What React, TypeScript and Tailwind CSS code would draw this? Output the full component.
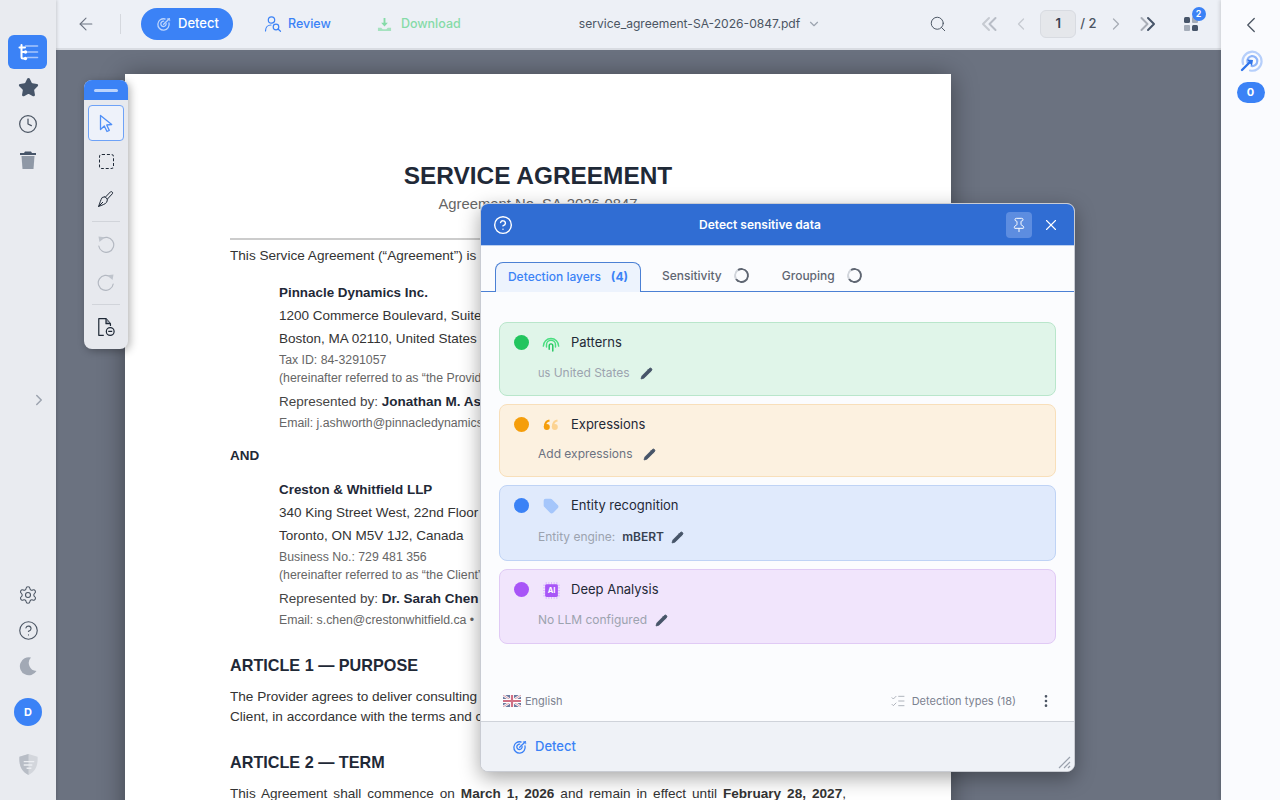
import React from "react";
import {
  ArrowLeft,
  ChevronDown,
  ChevronLeft,
  ChevronRight,
  CircleHelp,
  Clock,
  EllipsisVertical,
  ListChecks,
  Pencil,
  Pin,
  Search,
  Settings,
  Star,
  Tag,
  X,
} from "lucide-react";

const TargetIcon = ({ className = "" }: { className?: string }) => (
  <svg viewBox="0 0 24 24" fill="none" stroke="currentColor" strokeWidth="2" strokeLinecap="round" className={className}>
    <path d="M19.500 10.500a8.500 8.500 0 1 1-6-6" />
    <path d="M15.200 11.500a4 4 0 1 1-3.700-3.700" />
    <path d="M11.500 12.500 20 4" />
    <path d="M17 4.500 20 4l.5 3" opacity="0.7" />
  </svg>
);

const TreeIcon = () => (
  <svg viewBox="0 0 24 24" width="24" height="24" fill="none" strokeLinecap="round">
    <path d="M9.500 6h12M11.500 12h10M11.500 17.500h10" stroke="#a9c6fb" strokeWidth="1.600" />
    <path d="M5.500 5v12c0 1 .5 1.500 1.500 1.500h2M5.500 12H9M3.500 7.500H9" stroke="#fff" strokeWidth="2" />
    <circle cx="9.500" cy="12" r="1.700" fill="#fff" />
    <circle cx="9.500" cy="18.500" r="1.700" fill="#fff" />
  </svg>
);

const ReviewIcon = () => (
  <svg viewBox="0 0 18 18" width="18" height="18" fill="none" stroke="#3b82f6" strokeWidth="1.200" strokeLinecap="round">
    <circle cx="7.500" cy="5" r="3.200" />
    <path d="M1.500 16c0-3.500 2.400-6 5.500-6" />
    <circle cx="12" cy="12" r="2.800" />
    <path d="m14 14 2.500 2.300" />
  </svg>
);

const DownloadIcon = () => (
  <svg viewBox="0 0 16 16" width="15" height="15" fill="#86dba8">
    <path d="M7 1h2v5h2.600L8 10 4.400 6H7z" />
    <path d="M1 11.500h3.500L6 13h4l1.500-1.500H15V15H1z" opacity="0.7" />
  </svg>
);

const BlocksIcon = () => (
  <svg viewBox="0 0 16 16" width="16" height="16">
    <rect x="1" y="1" width="6" height="6" rx="1.500" fill="#475569" />
    <rect x="1" y="9" width="6" height="6" rx="1" fill="#a5adb9" />
    <rect x="9" y="9" width="6" height="6" rx="1.500" fill="#475569" />
    <rect x="9" y="1" width="6" height="6" rx="1" fill="#a5adb9" />
  </svg>
);

const DoubleChevron = ({ dir, first, second }: { dir: "left" | "right"; first: string; second: string }) => (
  <svg viewBox="0 0 20 20" width="20" height="20" fill="none" strokeWidth="2" strokeLinecap="round" strokeLinejoin="round" className={dir === "left" ? "-scale-x-100" : ""}>
    <path d="m3.500 4 6 6-6 6" stroke={first} />
    <path d="m10 4 6 6-6 6" stroke={second} />
  </svg>
);

const CursorIcon = () => (
  <svg viewBox="0 0 20 20" width="20" height="20" fill="none" stroke="#4f8ff7" strokeWidth="1.300" strokeLinejoin="round">
    <path d="M4.500 2.500v14l3.800-3.500 2.700 5.500 2.300-1.100-2.600-5.400 5-.500z" />
  </svg>
);

const TrashIcon = () => (
  <svg viewBox="0 0 18 20" width="18" height="20">
    <path d="M6 1.500h6l1 1.500h4v2H1V3h4z" fill="#475569" />
    <path d="M2.500 6h13L14.500 19h-11z" fill="#8f98a6" />
  </svg>
);

const MoonIcon = () => (
  <svg viewBox="0 0 20 20" width="20" height="20">
    <path d="M13 1.500A9 9 0 1 0 18.500 15 8 8 0 0 1 13 1.500z" fill="#a2a9b5" />
  </svg>
);

const ShieldIcon = () => (
  <svg viewBox="0 0 22 24" width="21" height="23">
    <path d="M11 1 20.500 4c.500 8-1.500 15-9.500 19C3 19 1 12 1.500 4z" fill="#d3d6dc" />
    <path d="M11 1v22C3 19 1 12 1.500 4z" fill="#b8bdc6" />
    <path d="M6 9h11M6 12.500h9M9 16h5" stroke="#eceef2" strokeWidth="1.500" />
  </svg>
);

const UndoIcon = ({ flip }: { flip?: boolean }) => (
  <svg viewBox="0 0 18 18" width="18" height="18" fill="none" className={flip ? "-scale-x-100" : ""}>
    <path d="M4 4.500a7.500 7.500 0 1 1-2.200 6.500" stroke="#b4b9c2" strokeWidth="1.200" strokeLinecap="round" />
    <path d="M1.500 1.500 7.500 2.200 2.500 7z" fill="#bfc4cc" />
  </svg>
);

const BrushIcon = () => (
  <svg viewBox="0 0 18 18" width="18" height="18" fill="none" stroke="#1f2937" strokeWidth="1" strokeLinejoin="round">
    <path d="M8 7.500 13.500 1.800c1-.900 2.800.800 1.900 1.900L10 9.500" />
    <path d="M5.200 7.500 8 6.700l2.500 2.700-.800 2.800C8 14.500 5 15 1.500 16.500 3 13 3.500 10 5.200 7.500z" />
    <path d="m1.500 16.500 4.500-4.500" />
  </svg>
);

const FileMinusIcon = () => (
  <svg viewBox="0 0 18 18" width="20" height="20" fill="none" stroke="#1f2937" strokeWidth="1.100" strokeLinejoin="round">
    <path d="M7 16.500H2.500V1.500H9L13 6v2" />
    <path d="M9 1.500V6h4" fill="#9ca3af" />
    <circle cx="12.800" cy="13" r="3.500" />
    <path d="M11 13h3.600" />
  </svg>
);

const TouchIcon = () => (
  <svg viewBox="0 0 20 20" width="18" height="18" fill="none" stroke="#4ade80" strokeWidth="1.600" strokeLinecap="round">
    <path d="M1.500 13.500a8.500 8.500 0 0 1 17 0" />
    <path d="M5 14.500V12a5 5 0 0 1 10 0v2.500" />
    <path d="M8 17v-4a2 2 0 0 1 4 0v6" stroke="#22c55e" />
  </svg>
);

const QuoteIcon = () => (
  <svg viewBox="0 0 16 12" width="16" height="12">
    <circle cx="3.800" cy="8" r="3" fill="#f59e0b" />
    <path d="M1.800 8C1.800 4.500 3.500 2 6.500 1.500" fill="none" stroke="#f59e0b" strokeWidth="2" />
    <circle cx="11.800" cy="8" r="3" fill="#fcd391" />
    <path d="M9.800 8c0-3.500 1.700-6 4.700-6.500" fill="none" stroke="#fcd391" strokeWidth="2" />
  </svg>
);

const AiIcon = () => (
  <svg viewBox="0 0 16 16" width="17" height="17">
    <path d="M3 0v16M5.500 0v16M8 0v16M10.500 0v16M13 0v16M0 3h16M0 5.500h16M0 8h16M0 10.500h16M0 13h16" stroke="#d8b4fe" strokeWidth="0.800" />
    <rect x="2" y="2" width="12" height="12" rx="1.500" fill="#a855f7" />
    <text x="8" y="10.700" textAnchor="middle" fontSize="7" fontWeight="700" fill="#fff" fontFamily="Inter">AI</text>
  </svg>
);

const FlagIcon = () => (
  <svg viewBox="0 0 18 12" width="18" height="12" opacity="0.75">
    <rect width="18" height="12" fill="#3d4f80" />
    <path d="m0 0 18 12M18 0 0 12" stroke="#fff" strokeWidth="2.400" />
    <path d="m0 0 18 12M18 0 0 12" stroke="#c4586f" strokeWidth="0.800" />
    <path d="M9 0v12M0 6h18" stroke="#fff" strokeWidth="4" />
    <path d="M9 0v12M0 6h18" stroke="#c4405c" strokeWidth="2.200" />
  </svg>
);

const TargetArrowIcon = () => (
  <svg viewBox="0 0 24 24" width="24" height="24" fill="none" strokeLinecap="round">
    <path d="M4 15a9.500 9.500 0 1 1 7 6.500" stroke="#b6cffb" strokeWidth="2.200" />
    <path d="M8.500 13.500a5 5 0 1 1 4 3.500" stroke="#8fb5f9" strokeWidth="2.200" />
    <path d="M3 21 10.500 13.500" stroke="#2f74ea" strokeWidth="2.400" />
    <path d="m8 10.500 6 .500-1 6z" fill="#2f74ea" />
  </svg>
);

const Spinner = () => (
  <span className="w-[15px] h-[15px] rounded-full border-2 border-[#5f6672] border-l-[#d1d5db] inline-block rotate-12" />
);

const PencilFilled = ({ className = "" }: { className?: string }) => (
  <Pencil size={13} className={`text-[#475569] ${className}`} fill="#475569" strokeWidth={1.500} />
);

const Sidebar = () => (
  <aside className="w-[56px] shrink-0 bg-[#e9ebf0] flex flex-col items-center pt-[35px] pb-[24px] shadow-[1px_0_3px_rgba(0,0,0,0.15)] z-10">
    <div className="w-[39px] h-[34px] -ml-[1px] rounded-md bg-[#3b82f6] flex items-center justify-center">
      <TreeIcon />
    </div>
    <Star size={21} className="mt-[8px] text-[#475569]" fill="#475569" />
    <Clock size={20} className="mt-[16px] text-[#4b5563]" strokeWidth={1.500} />
    <div className="mt-[16px]">
      <TrashIcon />
    </div>
    <div className="flex-1 flex items-center pt-[45px]">
      <ChevronRight size={18} className="text-[#9ca3af] ml-[22px]" />
    </div>
    <Settings size={20} className="text-[#4b5563]" strokeWidth={1.300} />
    <CircleHelp size={21} className="mt-[15px] text-[#4b5563]" strokeWidth={1.300} />
    <div className="mt-[15px]">
      <MoonIcon />
    </div>
    <div className="mt-[22px] w-[28px] h-[28px] rounded-full bg-[#3b82f6] flex items-center justify-center text-white text-[11px] font-bold">
      D
    </div>
    <div className="mt-[27px]">
      <ShieldIcon />
    </div>
  </aside>
);

const TopBar = () => (
  <header className="h-[50px] shrink-0 bg-[#edf0f6] border-b-2 border-[#d9dce2] flex items-center text-[12.500px] whitespace-nowrap">
    <ArrowLeft size={20} className="shrink-0 ml-[20px] text-[#6b7280]" strokeWidth={1.300} />
    <div className="ml-[24px] w-px h-[20px] bg-[#d5d8de]" />
    <button className="ml-[20px] h-[32px] w-[92px] pl-[1px] rounded-full bg-[#3b82f6] text-[13px] text-white flex items-center justify-center gap-[6px] font-medium">
      <TargetIcon className="w-[16px] h-[16px] text-[#bcd4fc]" />
      Detect
    </button>
    <div className="ml-[31px] flex items-center gap-[6px] text-[#3b82f6] font-medium">
      <ReviewIcon />
      Review
    </div>
    <div className="ml-[46px] flex items-center gap-[9px] text-[#86dba8] font-medium">
      <DownloadIcon />
      Download
    </div>
    <div className="ml-[118px] flex items-center gap-[7px] text-[12.100px] text-[#4b5563]">
      service_agreement-SA-2026-0847.pdf
      <ChevronDown size={14} className="text-[#9ca3af]" />
    </div>
    <Search size={18} className="shrink-0 ml-[108px] text-[#4b5563]" strokeWidth={1.300} />
    <div className="shrink-0 ml-[32px]">
      <DoubleChevron dir="left" first="#b8bdc6" second="#c6cad1" />
    </div>
    <ChevronLeft size={20} className="shrink-0 ml-[12px] text-[#c6cad1]" strokeWidth={1.500} />
    <div className="ml-[9px] w-[36px] h-[28px] shrink-0 rounded-md bg-[#e5e7eb] border border-[#d8dbe1] flex items-center justify-center text-[13px] font-semibold text-[#374151]">
      1
    </div>
    <span className="ml-[4px] text-[13px] font-medium text-[#4b5563]">/ 2</span>
    <ChevronRight size={20} className="shrink-0 ml-[9px] text-[#a8adb6]" strokeWidth={1.500} />
    <div className="shrink-0 ml-[12px]">
      <DoubleChevron dir="right" first="#a8adb6" second="#475569" />
    </div>
    <div className="shrink-0 ml-[25px] relative">
      <BlocksIcon />
      <span className="absolute -top-[9px] -right-[7px] w-[14px] h-[14px] rounded-full bg-[#3b82f6] text-white text-[9px] font-semibold flex items-center justify-center">
        2
      </span>
    </div>
  </header>
);

const Party = ({ name, lines, id, ref1, rep, email }: { name: string; lines: string[]; id: string; ref1: string; rep: string; email: string }) => (
  <div className="ml-[49px]">
    <div className="font-bold text-[13.400px] leading-[23px] text-[#1f2937]">{name}</div>
    {lines.map((l) => (
      <div key={l} className="text-[13.500px] leading-[23px] text-[#333]">{l}</div>
    ))}
    <div className="text-[12.300px] leading-[21px] text-[#666]">{id}</div>
    <div className="text-[12.300px] leading-[15px] text-[#666]">{ref1}</div>
    <div className="text-[13.500px] leading-[26px] mt-[3px] text-[#444]">
      Represented by: <b className="text-[#1f2937]">{rep}</b>
    </div>
    <div className="text-[12.300px] leading-[19px] -mt-[1px] text-[#666]">{email}</div>
  </div>
);

const Page = () => (
  <div className="absolute left-[69px] top-[24px] w-[826px] bg-white shadow-[0_2px_24px_rgba(0,0,0,0.4)] px-[105px] pt-[86px] pb-[60px] font-['Liberation_Sans',Arial,sans-serif] text-[#333]">
    <h1 className="text-center text-[24.400px] leading-[32px] font-bold text-[#1f2937]">SERVICE AGREEMENT</h1>
    <p className="text-center text-[14.800px] leading-[22px] text-[#666] mt-[1px]">Agreement No. SA-2026-0847</p>
    <div className="h-[2px] bg-[#ccc] mt-[23px]" />
    <p className="text-[13.600px] leading-[24px] mt-[4px] whitespace-nowrap">
      This Service Agreement (“Agreement”) is entered into as of March 1, 2026, by and between:
    </p>
    <div className="mt-[13px]">
      <Party
        name="Pinnacle Dynamics Inc."
        lines={["1200 Commerce Boulevard, Suite 400", "Boston, MA 02110, United States"]}
        id="Tax ID: 84-3291057"
        ref1="(hereinafter referred to as “the Provider”)"
        rep="Jonathan M. Ashworth, CEO"
        email="Email: j.ashworth@pinnacledynamics.com"
      />
    </div>
    <div className="font-bold text-[13.500px] leading-[20px] mt-[13px] text-[#1f2937]">AND</div>
    <div className="mt-[12px]">
      <Party
        name="Creston & Whitfield LLP"
        lines={["340 King Street West, 22nd Floor", "Toronto, ON M5V 1J2, Canada"]}
        id="Business No.: 729 481 356"
        ref1="(hereinafter referred to as “the Client”)"
        rep="Dr. Sarah Chen"
        email={"Email: s.chen@crestonwhitfield.ca • \u00a0\u00a0\u00a0+1 416 555 0142"}
      />
    </div>
    <h2 className="font-bold text-[16.200px] leading-[24px] mt-[23px] text-[#1f2937]">ARTICLE 1 — PURPOSE</h2>
    <p className="text-[13.600px] leading-[20px] mt-[10px] text-justify">
      The Provider agrees to deliver consulting services to support the digital transformation of the
      <br />
      Client, in accordance with the terms and conditions set out in this Agreement.
    </p>
    <h2 className="font-bold text-[16.200px] leading-[24px] mt-[23px] text-[#1f2937]">ARTICLE 2 — TERM</h2>
    <p className="text-[13.600px] leading-[20px] mt-[10px] text-justify [text-align-last:justify]">
      This Agreement shall commence on <b>March 1, 2026</b> and remain in effect until <b>February 28, 2027</b>,
    </p>
  </div>
);

const Toolbar = () => (
  <div className="absolute left-[28px] top-[30px] w-[44px] h-[269px] rounded-lg bg-[#e7e9ee] shadow-[2px_2px_8px_rgba(0,0,0,0.3)] overflow-hidden flex flex-col items-center">
    <div className="w-full h-[20px] shrink-0 bg-[#3b82f6] flex items-center justify-center">
      <div className="w-[24px] h-[3px] rounded bg-[#bcd4fc]" />
    </div>
    <div className="mt-[5px] w-[36px] h-[36px] shrink-0 rounded border border-[#6ea2f7] bg-[#eef2fa] flex items-center justify-center">
      <CursorIcon />
    </div>
    <div className="mt-[1px] h-[38px] shrink-0 flex items-center">
      <div className="w-[15px] h-[15px] rounded-[3px] border-[1.500px] border-dashed border-[#1f2937]" />
    </div>
    <div className="h-[38px] shrink-0 flex items-center">
      <BrushIcon />
    </div>
    <div className="w-[28px] h-px bg-[#d1d4da] shrink-0 mt-[3px]" />
    <div className="h-[38px] shrink-0 flex items-center mt-[3px]">
      <UndoIcon />
    </div>
    <div className="h-[38px] shrink-0 flex items-center">
      <UndoIcon flip />
    </div>
    <div className="w-[28px] h-px bg-[#d1d4da] shrink-0 mt-[3px]" />
    <div className="h-[44px] shrink-0 flex items-center">
      <FileMinusIcon />
    </div>
  </div>
);

const LayerCard = ({ cardClass, dotClass, icon, title, height, subClass, children }: { cardClass: string; dotClass: string; icon: React.ReactNode; title: string; height: string; subClass: string; children: React.ReactNode }) => (
  <div className={`rounded-lg border px-[14px] pt-[11px] ${cardClass} ${height}`}>
    <div className="flex items-center h-[18px]">
      <span className={`w-[15px] h-[15px] rounded-full -translate-y-[1px] ${dotClass}`} />
      <span className="w-[20px] ml-[12px] flex justify-center">{icon}</span>
      <span className="ml-[10px] text-[13px] text-[#1f2937]">{title}</span>
    </div>
    <div className={`ml-[24px] flex items-center gap-[10px] text-[12px] h-[16px] ${subClass}`}>{children}</div>
  </div>
);

const Dialog = () => (
  <div className="absolute left-[480px] top-[203px] w-[595px] h-[569px] rounded-lg bg-[#fbfcfe] border border-[#c9ccd3] shadow-[0_6px_20px_rgba(0,0,0,0.35)] overflow-hidden flex flex-col z-20">
    <div className="h-[42px] shrink-0 bg-[#306dd3] border-b border-[#bcd0f0] flex items-center text-white px-[12px]">
      <CircleHelp size={20} strokeWidth={1.700} />
      <span className="flex-1 text-center text-[12px] font-semibold pl-[1px]">Detect sensitive data</span>
      <div className="w-[26px] h-[26px] rounded bg-[#5d8de0] flex items-center justify-center">
        <Pin size={16} strokeWidth={1.500} />
      </div>
      <X size={18} strokeWidth={1.500} className="ml-[10px] mr-[2px]" />
    </div>
    <div className="h-[46px] shrink-0 border-b border-[#4b80d4] flex items-end pl-[14px] text-[12px]">
      <div className="h-[30px] w-[146px] pb-[1px] rounded-t-lg border border-b-0 border-[#4b80d4] bg-[#edf3fd] text-[#3b82f6] font-medium flex items-center justify-center gap-[10px] -mb-px">
        Detection layers <b className="font-bold">(4)</b>
      </div>
      <div className="h-[30px] pb-[1px] ml-[21px] flex items-center gap-[12px] text-[#5f6672] font-medium">
        Sensitivity <Spinner />
      </div>
      <div className="h-[30px] pb-[1px] ml-[33px] flex items-center gap-[12px] text-[#5f6672] font-medium">
        Grouping <Spinner />
      </div>
    </div>
    <div className="flex-1 pt-[30px] px-[18px] flex flex-col gap-[8px]">
      <LayerCard
        cardClass="bg-[#e0f5e9] border-[#b9e6cb]"
        dotClass="bg-[#22c55e]"
        icon={<TouchIcon />}
        title="Patterns"
        height="h-[74px]"
        subClass="mt-[13px]"
      >
        <span className="text-[#9ca3af]"><span className="text-[11px]">us</span> United States</span>
        <PencilFilled />
      </LayerCard>
      <LayerCard
        cardClass="bg-[#fcf1e0] border-[#f8dfba]"
        dotClass="bg-[#f59e0b]"
        icon={<QuoteIcon />}
        title="Expressions"
        height="h-[73px]"
        subClass="mt-[12px]"
      >
        <span className="text-[#6b7280]">Add expressions</span>
        <PencilFilled className="ml-[1px]" />
      </LayerCard>
      <LayerCard
        cardClass="bg-[#e0eafc] border-[#bfd3f5]"
        dotClass="bg-[#3b82f6]"
        icon={<Tag size={16} className="text-[#a5c6fb]" fill="#a5c6fb" />}
        title="Entity recognition"
        height="h-[76px]"
        subClass="mt-[14px]"
      >
        <span className="text-[#9ca3af]">Entity engine:</span>
        <span className="-ml-[3px] font-semibold text-[#374151]">mBERT</span>
        <PencilFilled className="-ml-[3px]" />
      </LayerCard>
      <LayerCard
        cardClass="bg-[#f1e5fc] border-[#e0caf5]"
        dotClass="bg-[#a855f7]"
        icon={<AiIcon />}
        title="Deep Analysis"
        height="h-[75px]"
        subClass="mt-[13px]"
      >
        <span className="text-[#9ca3af]">No LLM configured</span>
        <PencilFilled className="-ml-[2px]" />
      </LayerCard>
    </div>
    <div className="h-[40px] shrink-0 flex items-center pl-[22px] pr-[20px] text-[11px] text-[#7b8290]">
      <FlagIcon />
      <span className="ml-[4px]">English</span>
      <ListChecks size={16} strokeWidth={1} className="ml-auto text-[#8a909c]" />
      <span className="ml-[6px]">Detection types (18)</span>
      <EllipsisVertical size={16} className="ml-[22px] text-[#4b5563]" />
    </div>
    <div className="relative h-[50px] shrink-0 bg-[#eff2f7] border-t border-[#cfd3da] flex items-center pl-[31px] text-[13px] font-medium text-[#3b82f6] gap-[7px]">
      <TargetIcon className="w-[16px] h-[16px]" />
      Detect
      <svg viewBox="0 0 14 14" width="14" height="14" className="absolute right-[3px] bottom-[2px]" stroke="#9aa1ad" strokeWidth="1.200">
        <path d="M2 13 13 2M7 13l6-6M11 13l2-2" />
      </svg>
    </div>
  </div>
);

const RightPanel = () => (
  <aside className="w-[59px] shrink-0 bg-[#fafbfe] flex flex-col items-center pt-[12px] shadow-[-1px_0_4px_rgba(0,0,0,0.15)] z-10">
    <ChevronLeft size={26} className="text-[#4b5563]" strokeWidth={1.200} />
    <div className="mt-[11px]">
      <TargetArrowIcon />
    </div>
    <div className="mt-[9px] w-[28px] h-[21px] rounded-full bg-[#3b82f6] text-white text-[11px] font-bold flex items-center justify-center">
      0
    </div>
  </aside>
);

export default function App() {
  return (
    <div className="relative w-[1280px] h-[800px] overflow-hidden flex font-['Inter',sans-serif]">
      <Sidebar />
      <main className="flex-1 flex flex-col min-w-0">
        <TopBar />
        <div className="relative flex-1 bg-[#6b7280] overflow-hidden">
          <Page />
          <Toolbar />
        </div>
      </main>
      <RightPanel />
      <Dialog />
    </div>
  );
}
